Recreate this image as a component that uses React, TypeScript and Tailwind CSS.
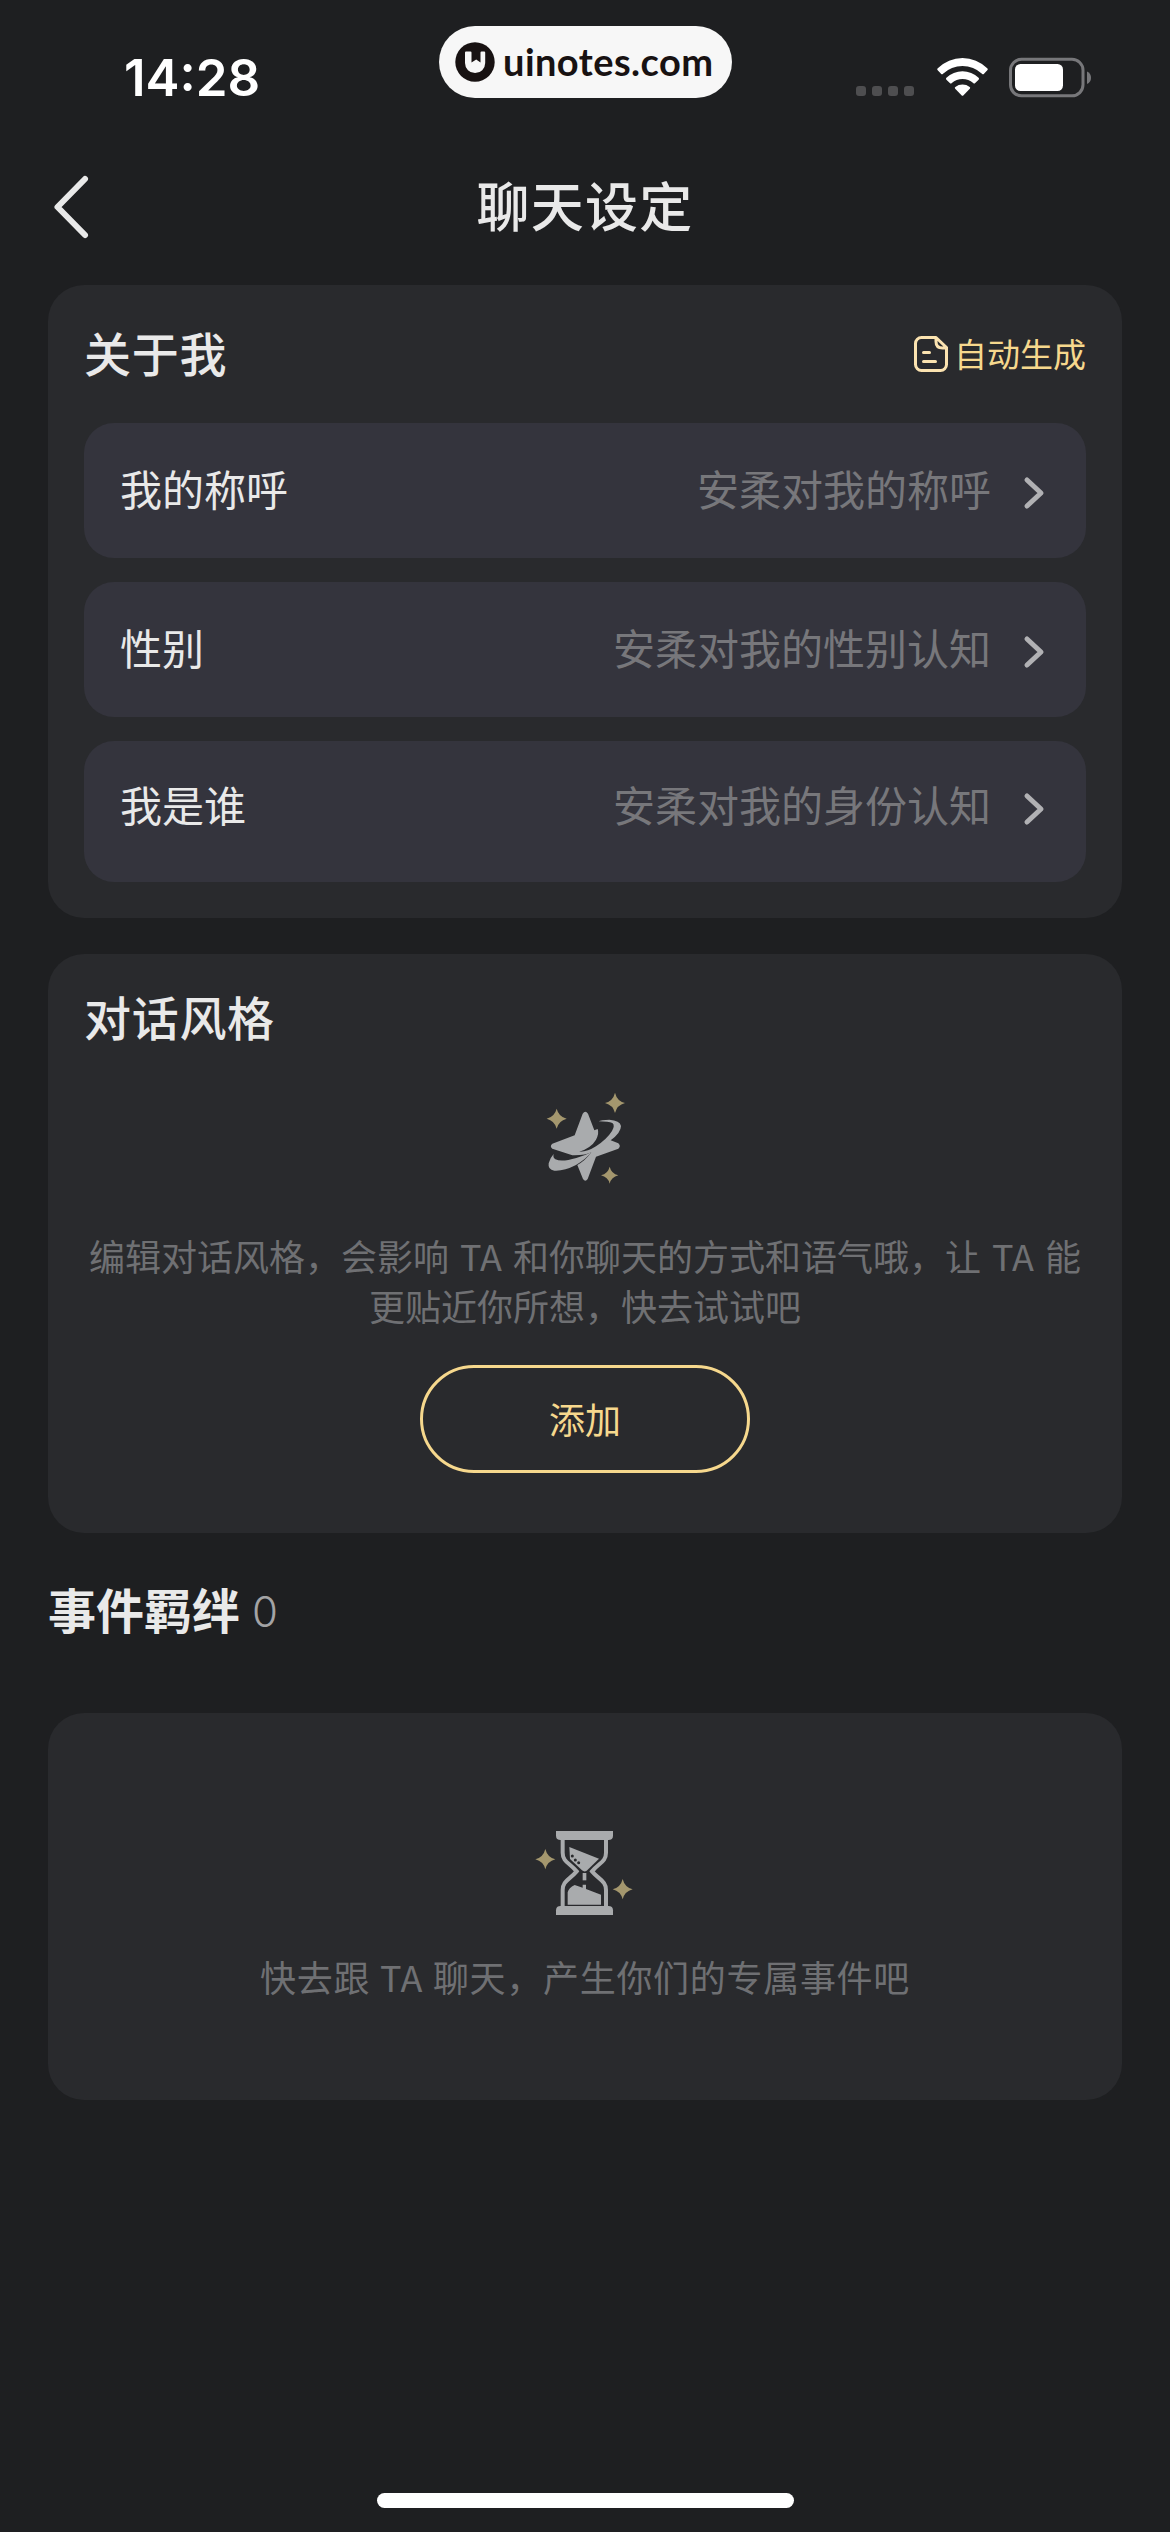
import { ReactNode } from 'react'

interface SettingRow {
  label: string
  placeholder: string
  className: string
}

const ROWS: SettingRow[] = [
  { label: '我的称呼', placeholder: '安柔对我的称呼', className: 'h-[135px]' },
  { label: '性别', placeholder: '安柔对我的性别认知', className: 'h-[135px]' },
  { label: '我是谁', placeholder: '安柔对我的身份认知', className: 'h-[141px] pb-[10px]' },
]

function StatusBar() {
  return (
    <div className="h-[141px] flex items-start pl-[124px] pr-[78px]">
      <div className="w-[315px] pt-[48px] font-['Inter',sans-serif] font-semibold text-[51px] leading-[60px] text-white">
        14:28
      </div>
      <div className="mt-[26px] w-[293px] h-[72px] rounded-full bg-[#f7f7f7] flex items-center pl-4">
        <svg width="40" height="40" viewBox="0 0 40 40" className="shrink-0">
          <circle cx="20" cy="20" r="19.7" fill="#181212" />
          <path
            d="M10 10.5q0-1 1-1h4.500q1 0 1 1V20.500L21.200 17.500L25.500 20.500V10.500q0-1 1-1h2.700q1 0 1 1V21a10 10 0 0 1-20.200 0z"
            fill="#f7f7f7"
          />
        </svg>
        <span className="ml-[8px] mb-[2px] font-['Lato',sans-serif] font-bold text-[38px] leading-[46px] tracking-[0.450px] text-[#181212] whitespace-nowrap">
          uinotes.com
        </span>
      </div>
      <div className="ml-auto pt-[57px] flex">
        <div className="flex gap-[6px] pt-[29px] mr-[22px]">
          {[0, 1, 2, 3].map((i) => (
            <span key={i} className="size-[10px] rounded-[3px] bg-[#4e4e50]" />
          ))}
        </div>
        <svg width="53" height="40" viewBox="0 0 53 40" fill="#fff" className="mr-5">
          <path d="M1.700 13.200Q.700 12.200 1.800 11.200A35 35 0 0 1 51.200 11.200Q52.300 12.200 51.300 13.200L48 16.700Q47 17.700 46 16.700A28.500 28.500 0 0 0 7 16.700Q6 17.700 5 16.700Z" />
          <path d="M10.400 22.700Q9.400 21.700 10.400 20.700A23.500 23.500 0 0 1 42.600 20.700Q43.600 21.700 42.600 22.700L39.200 26.100Q38.200 27.100 37.200 26.100A16 16 0 0 0 15.800 26.100Q14.800 27.100 13.800 26.100Z" />
          <path d="M19.200 31.700Q18.300 30.700 19.300 29.900A12 12 0 0 1 33.700 29.900Q34.700 30.700 33.800 31.700L27.500 38.300Q26.500 39.300 25.500 38.300Z" />
        </svg>
        <svg width="83" height="42" viewBox="0 0 83 42">
          <rect x="1.500" y="2.300" width="72.500" height="36.500" rx="11" fill="none" stroke="#77777a" strokeWidth="3" />
          <rect x="6" y="7" width="48" height="27" rx="5.500" fill="#fff" />
          <path d="M78 14.500v12.500q4-1.800 4-6.200t-4-6.300z" fill="#77777a" />
        </svg>
      </div>
    </div>
  )
}

function Card({ className, children }: { className: string; children: ReactNode }) {
  return <section className={`mx-12 rounded-[36px] bg-[#292a2d] ${className}`}>{children}</section>
}

function DocIcon() {
  return (
    <svg
      width="36"
      height="38"
      viewBox="0 0 36 38"
      fill="none"
      stroke="#fbe3b0"
      strokeWidth="3"
      strokeLinecap="round"
      strokeLinejoin="round"
    >
      <path d="M23 2.500H8.500a6 6 0 0 0-6 6v21a6 6 0 0 0 6 6h19a6 6 0 0 0 6-6V12.500L23 2.500v4q0 6.500 6.500 6.500h4" />
      <path d="M10.500 17.500h6M10.500 26.500h12" />
    </svg>
  )
}

function StarIcon() {
  return (
    <svg width="130" height="120" viewBox="0 0 390 360">
      <g fill="#a4976e">
        <path d="M110 86q6 24 30 30q-24 6-30 30q-6-24-30-30q24-6 30-30z" />
        <path d="M285 38q6 25 30 31q-24 6-30 30q-6-24-30-30q24-6 30-31z" />
        <path d="M269 260q5 21 26 26q-21 5-26 25q-5-20-26-25q21-5 26-26z" />
      </g>
      <g fill="#a9abad">
        <path d="M188 101Q196 90 204 101L223 151L233 147Q238 160 228 179Q214 203 178 215Q202 216 228 199Q261 177 276 153Q286 136 277 129Q266 124 236 124Q243 119 268 119Q300 121 303 138Q303 158 272 181L295 190Q304 199 295 206L228 230L203 297Q196 308 189 297L172 255Q196 242 214 217Q196 227 157 226L97 206Q88 198 97 191L164 166Z" />
        <path d="M101 222Q98 233 106 238Q125 247 169 234Q196 226 215 216Q199 236 168 255Q131 274 103 272Q83 270 86 250Q89 235 101 222Z" />
      </g>
    </svg>
  )
}

function HourglassIcon() {
  return (
    <svg width="150" height="140" viewBox="0 0 450 420">
      <g fill="#a4976e">
        <path d="M106 147q6 25 30 31q-24 6-30 30q-6-24-30-30q24-6 30-31z" />
        <path d="M338 237q6 25 30 31q-24 6-30 30q-6-24-30-30q24-6 30-31z" />
      </g>
      <g fill="#a9abad">
        <path d="M138 93h171v14q0 13-14 13H152q-14 0-14-13z" />
        <path d="M138 345h171v-14q0-13-14-13H152q-14 0-14 13z" />
        <path d="M178 141L267 176L230 212Q223 217 216 211L180 177Z" />
        <path d="M218 219h11v22h-11z" />
        <path d="M173 314V277Q176 264 194 255L218 263V254h10v13L273 284V314Z" />
      </g>
      <path
        d="M158 114V158C158 186 178 188 200 214C178 240 158 242 158 270V324M288 114V158C288 186 268 188 246 214C268 240 288 242 288 270V324"
        fill="none"
        stroke="#a9abad"
        strokeWidth="12"
      />
      <g fill="#292a2d">
        <circle cx="187" cy="168" r="4.500" />
        <circle cx="196" cy="180" r="4.500" />
        <circle cx="206" cy="188" r="4.500" />
      </g>
    </svg>
  )
}

export default function App() {
  return (
    <div className="w-[1170px] h-[2532px] flex flex-col bg-[#1e1f21] text-[#e9e9e9] font-['Noto_Sans_CJK_SC',sans-serif]">
      <StatusBar />

      <header className="h-[144px] pl-[53px] pr-[53px] flex items-start justify-between">
        <svg width="38" height="66" viewBox="0 0 38 66" className="mt-[33px]" fill="none">
          <path d="M32 5L4.500 33L32 61" stroke="#e9e9e9" strokeWidth="6" strokeLinecap="round" strokeLinejoin="round" />
        </svg>
        <h1 className="mt-[23px] font-medium text-[53px] leading-[80px] tracking-[1.200px]">聊天设定</h1>
        <span className="w-[38px]" />
      </header>

      <Card className="h-[633px] px-9">
        <div className="h-[138px] flex items-center justify-between">
          <h2 className="mb-[5px] font-medium text-[47px] leading-[70px] tracking-[0.700px]">关于我</h2>
          <div className="flex items-center gap-[5px]">
            <DocIcon />
            <span className="mb-[3px] text-[33px] leading-[48px] text-[#f6d88d]">自动生成</span>
          </div>
        </div>
        <div className="flex flex-col gap-6">
          {ROWS.map((row) => (
            <div
              key={row.label}
              className={`rounded-[30px] bg-[#34343d] pl-9 pr-10 flex items-center ${row.className}`}
            >
              <span className="mb-[5px] text-[42px] leading-[62px]">{row.label}</span>
              <span className="mb-[5px] ml-auto text-[42px] leading-[62px] text-[#77777b]">{row.placeholder}</span>
              <svg width="24" height="36" viewBox="0 0 24 36" className="ml-[31px] mt-1" fill="none">
                <path d="M5 5L19 18L5 31" stroke="#b1b1b4" strokeWidth="5" strokeLinecap="round" strokeLinejoin="round" />
              </svg>
            </div>
          ))}
        </div>
      </Card>

      <Card className="mt-9 h-[579px] px-9 flex flex-col items-center">
        <h2 className="self-start mt-[27px] font-medium text-[47px] leading-[70px] tracking-[0.700px]">对话风格</h2>
        <div className="mt-[29px]">
          <StarIcon />
        </div>
        <p className="mt-[30px] text-[36px] leading-[50px] [word-spacing:3px] text-[#6f7073] text-center whitespace-nowrap">
          编辑对话风格，会影响 TA 和你聊天的方式和语气哦，让 TA 能
          <br />
          更贴近你所想，快去试试吧
        </p>
        <button className="mt-[35px] w-[330px] h-[108px] pb-[3px] rounded-full border-[3px] border-[#f6d88d] text-[36px] text-[#f6d88d]">
          添加
        </button>
      </Card>

      <div className="h-[180px] pl-12 pt-[40px] flex items-start">
        <h2 className="font-bold text-[48px] leading-[70px]">事件羁绊</h2>
        <span className="ml-3 mt-[6px] font-['Inter',sans-serif] font-light text-[42px] leading-[66px] text-[#a3a3a5]">0</span>
      </div>

      <Card className="h-[387px] pt-[87px] flex flex-col items-center">
        <HourglassIcon />
        <p className="mt-[11px] text-[36px] leading-[50px] tracking-[0.700px] [word-spacing:1px] text-[#6f7073]">
          快去跟 TA 聊天，产生你们的专属事件吧
        </p>
      </Card>

      <div className="mt-auto mb-[24px] mx-auto w-[417px] h-[15px] rounded-full bg-white" />
    </div>
  )
}
